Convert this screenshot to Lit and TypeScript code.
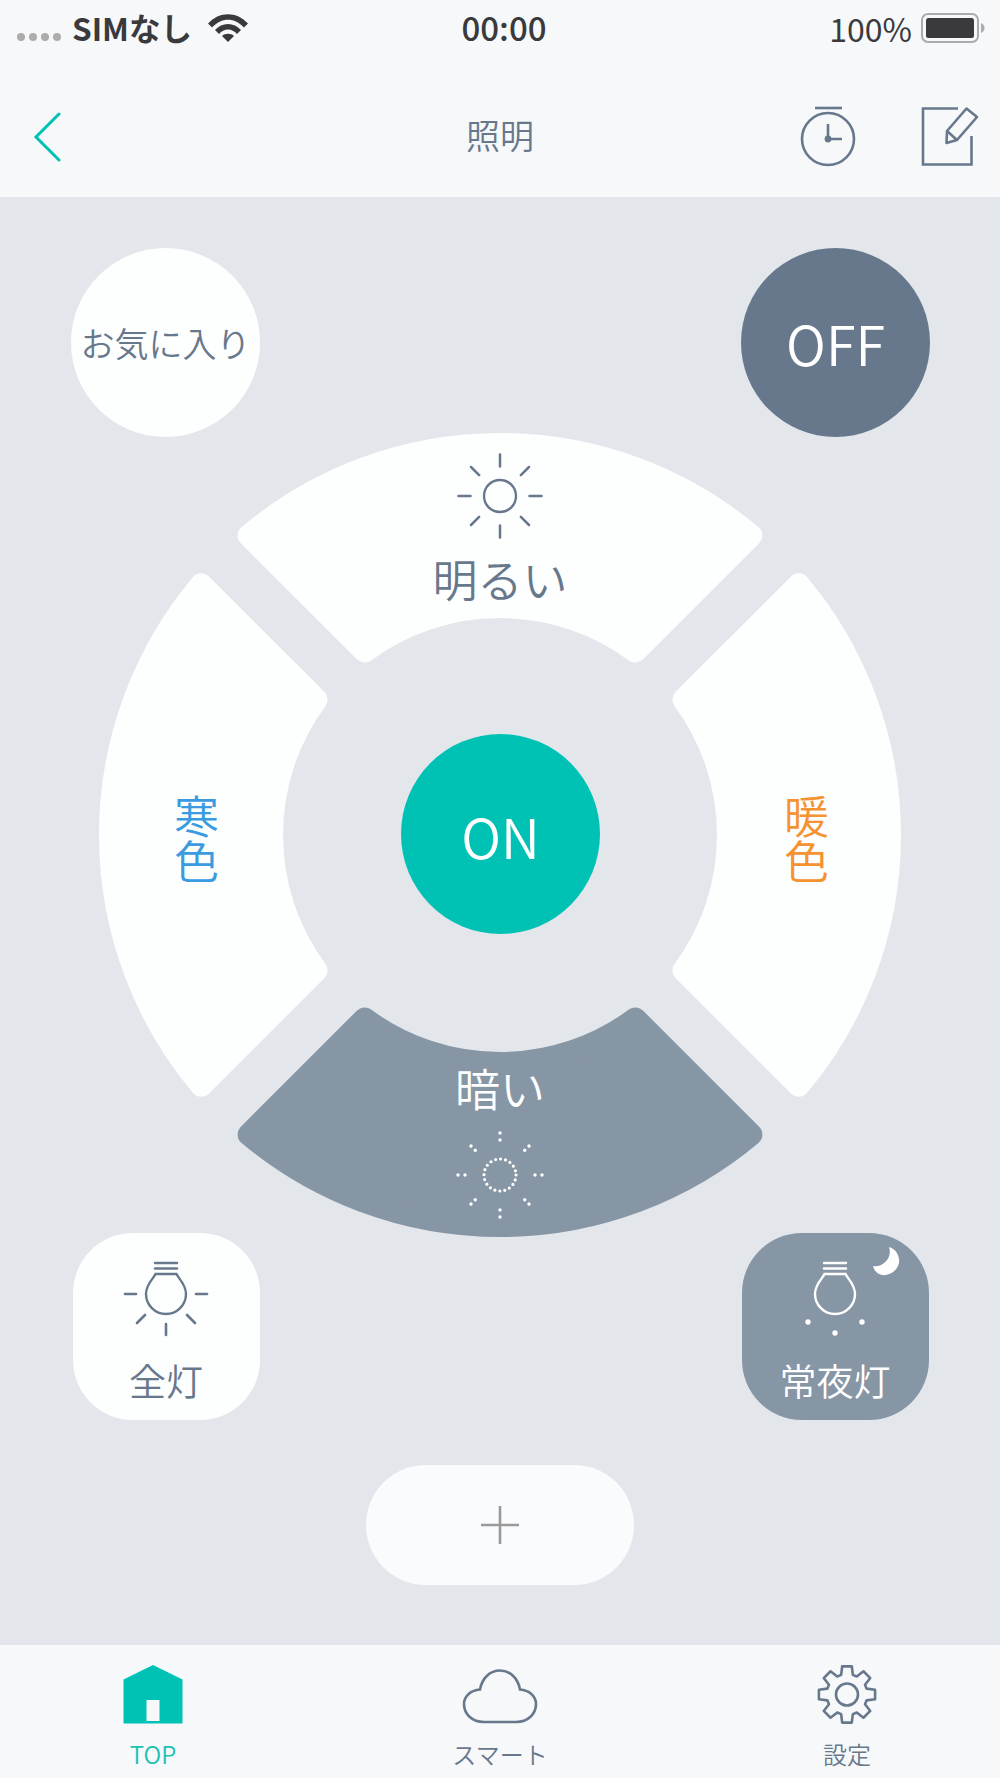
import { LitElement, html, css, svg } from "lit";
import { customElement } from "lit/decorators.js";

const RAD = Math.PI / 180;

function segmentPath(theta: number, ro = 391, cx = 402, cy = 402, ri = 228, d = 34): string {
  const pt = (r: number, a: number) => {
    const t = (a - 90) * RAD;
    return `${(cx + r * Math.cos(t)).toFixed(2)} ${(cy + r * Math.sin(t)).toFixed(2)}`;
  };
  const ao = 45 - Math.asin(d / ro) / RAD;
  const ai = 45 - Math.asin(d / ri) / RAD;
  return `M${pt(ro, theta - ao)} A${ro} ${ro} 0 0 1 ${pt(ro, theta + ao)} L${pt(ri, theta + ai)} A${ri} ${ri} 0 0 0 ${pt(ri, theta - ai)} Z`;
}

function gearPath(cx: number, cy: number): string {
  const pts: string[] = [];
  for (let k = 0; k < 8; k++) {
    const a = (k * 45 - 90) * RAD;
    const seq: [number, number][] = [[20.5, -0.29], [28.5, -0.17], [28.5, 0.17], [20.5, 0.29]];
    for (const [r, o] of seq) {
      pts.push(`${(cx + r * Math.cos(a + o)).toFixed(2)} ${(cy + r * Math.sin(a + o)).toFixed(2)}`);
    }
  }
  return `M${pts.join(" L")} Z`;
}

const rays = [0, 45, 90, 135, 180, 225, 270, 315];

function sun(dim: boolean) {
  return svg`<svg class="sun" viewBox="-46 -46 92 92" width="92" height="92" aria-hidden="true">
    ${dim
      ? svg`<circle r="16" fill="none" stroke="#fff" stroke-width="3.2" stroke-linecap="round" stroke-dasharray="0 5.03"/>
        ${rays.map((a) => {
          const diag = a % 90 !== 0;
          const r1 = 35;
          const r2 = diag ? 41 : 42;
          return svg`<g transform="rotate(${a})"><circle cx="0" cy="${-r1}" r="1.7" fill="#fff"/><circle cx="0" cy="${-r2}" r="1.7" fill="#fff"/></g>`;
        })}`
      : svg`<circle r="16" fill="none" stroke="#68788c" stroke-width="2.4"/>
        ${rays.map((a) => {
          const diag = a % 90 !== 0;
          return svg`<line transform="rotate(${a})" x1="0" y1="-29.5" x2="0" y2="${diag ? -41 : -41.5}" stroke="#68788c" stroke-width="2.5" stroke-linecap="round"/>`;
        })}`}
  </svg>`;
}

function bulb(color: string, extra: unknown) {
  return svg`<svg class="bulb" viewBox="-46 0 92 84" width="92" height="84" aria-hidden="true">
    <g fill="none" stroke="${color}" stroke-width="2.4" stroke-linecap="round">
      <line x1="-11" y1="3" x2="11" y2="3"/>
      <line x1="-11" y1="8.5" x2="11" y2="8.5"/>
      <path d="M-10.5 14 H10.5 C12 18 20 24 20 34 C20 45 11 54 0 54 C-11 54 -20 45 -20 34 C-20 24 -12 18 -10.5 14 Z"/>
    </g>
    ${extra}
  </svg>`;
}

@customElement("app-root")
export class AppRoot extends LitElement {
  static styles = css`
    :host {
      display: flex;
      flex-direction: column;
      width: 1000px;
      height: 1778px;
      background: #f6f8fa;
      font-family: "Noto Sans CJK JP", "Noto Sans", sans-serif;
      font-weight: 350;
      color: #68788c;
      overflow: hidden;
    }
    .status {
      height: 55px;
      margin-bottom: 5px;
      display: grid;
      grid-template-columns: 1fr auto 1fr;
      align-items: center;
      padding: 0 15px 0 17px;
      font-size: 32px;
      color: #3a3a3c;
      line-height: 1;
    }
    .st-left, .st-right { display: flex; align-items: center; }
    .st-right { justify-content: flex-end; font-weight: 400; }
    .dots { display: flex; gap: 4px; margin-right: 11px; margin-top: 18px; }
    .dots i { width: 8px; height: 8px; border-radius: 50%; background: #acacac; }
    .sim { font-weight: 700; font-size: 31.5px; }
    .wifi { margin-left: 16px; }
    .time { font-weight: 500; font-size: 33px; transform: translateX(3px); }
    .batt { margin-left: 9px; }
    .nav {
      height: 137px;
      padding-top: 16px;
      box-sizing: border-box;
      display: grid;
      grid-template-columns: 1fr auto 1fr;
      align-items: center;
    }
    .back { display: block; margin-left: 33px; }
    .title { font-size: 34px; line-height: 1; margin-top: -4px; }
    .nav-actions { display: flex; justify-content: flex-end; padding-right: 20px; }
    .main {
      flex: 1;
      background: #e3e7ec;
      display: flex;
      flex-direction: column;
      align-items: center;
      padding-top: 51px;
    }
    .row { width: 859px; margin-left: 1px; display: flex; justify-content: space-between; }
    .round {
      width: 189px; height: 189px; border-radius: 50%;
      display: flex; align-items: center; justify-content: center;
      line-height: 1;
    }
    .fav { background: #fdfefe; font-size: 34px; white-space: nowrap; }
    .off { background: #67788c; color: #fff; font-size: 54px; }
    .wheel { position: relative; width: 804px; height: 804px; margin-top: -4px; }
    .wheel > svg { display: block; }
    .seg-label {
      position: absolute; left: 0; right: 0;
      display: flex; flex-direction: column; align-items: center;
      font-size: 45px; line-height: 1;
    }
    .up { top: 17px; }
    .up .t { margin-top: 14px; }
    .down { top: 632px; color: #fff; }
    .down .sun { margin-top: 19px; }
    .side {
      position: absolute; top: 361px;
      width: 84px; height: 90px;
      writing-mode: vertical-rl;
      font-size: 45px; line-height: 84px; text-align: center;
    }
    .cold { left: 56px; color: #3b9be1; }
    .warm { left: 666px; color: #f59231; }
    .on {
      position: absolute; left: 303px; top: 301px;
      width: 199px; height: 200px; border-radius: 50%;
      background: #00c2b4; color: #fff;
      display: flex; align-items: center; justify-content: center;
      padding-top: 4px; box-sizing: border-box;
      font-size: 54px; line-height: 1;
    }
    .row2 { margin-top: -4px; width: 856px; margin-left: 1px; }
    .preset {
      position: relative;
      width: 187px; height: 187px; border-radius: 60px;
      display: flex; flex-direction: column; align-items: center;
      padding-top: 27px; box-sizing: border-box;
      font-size: 37px; line-height: 1;
    }
    .preset .t { margin-top: 18px; white-space: nowrap; }
    .preset svg { overflow: visible; }
    .all { background: #fdfefe; }
    .night { background: #8796a5; color: #fff; }
    .add {
      margin-top: 45px; width: 268px; height: 120px; border-radius: 60px;
      background: #fafbfd; display: flex; align-items: center; justify-content: center;
    }
    .tabs {
      height: 133px;
      display: grid;
      grid-template-columns: 306px 1fr 306px;
    }
    .tab {
      display: flex; flex-direction: column; align-items: center;
      font-size: 24px; line-height: 1;
      padding-top: 19px;
      height: 133px; box-sizing: border-box;
    }
    .tab svg { display: block; }
    .tab .t { margin-top: 18px; }
    .tab.top { color: #1cc2b4; }
  `;

  render() {
    const dark = "#68788c";
    return html`
      <div class="status">
        <div class="st-left">
          <div class="dots"><i></i><i></i><i></i><i></i></div>
          <span class="sim">SIMなし</span>
          <svg class="wifi" width="40" height="28" viewBox="0 0 40 28" aria-hidden="true">
            <path fill="#3a3a3c" d="M0 9.5 C11-3 29-3 40 9.5 L36 13.5 C26.5 3 13.5 3 4 13.5 Z"/>
            <path fill="#3a3a3c" d="M7 16 C14 8 26 8 33 16 L29 20 C24 14 16 14 11 20 Z"/>
            <path fill="#3a3a3c" d="M14 22 C17 19 23 19 26 22 L20 28 Z"/>
          </svg>
        </div>
        <div class="time">00:00</div>
        <div class="st-right">
          <span>100%</span>
          <svg class="batt" width="64" height="30" viewBox="0 0 64 30" aria-hidden="true">
            <rect x="1" y="1" width="56" height="28" rx="6" fill="none" stroke="#acacac" stroke-width="2"/>
            <rect x="5" y="5" width="48" height="20" rx="2.5" fill="#3a3a3c"/>
            <path d="M60 10 C62.5 11 63.5 13 63.5 15 C63.5 17 62.5 19 60 20 Z" fill="#acacac"/>
          </svg>
        </div>
      </div>
      <div class="nav">
        <svg class="back" width="32" height="50" viewBox="0 0 32 50" aria-hidden="true">
          <path d="M26 2 L3 25 L26 48" fill="none" stroke="#00c2b4" stroke-width="3" stroke-linecap="round"/>
        </svg>
        <div class="title">照明</div>
        <div class="nav-actions">
          <svg width="180" height="62" viewBox="800 106 180 62" aria-hidden="true">
            <g fill="none" stroke="${dark}" stroke-width="2.6">
              <line x1="815" y1="108" x2="842" y2="108"/>
              <circle cx="828" cy="139" r="26"/>
              <path d="M828 124 V139 H842"/>
              <path d="M958 108.5 H923 V164.5 H971.5 V136"/>
              <path d="M946.5 143 L947 131 L966.5 108.5 L977 117 L957 140 Z M947 131 L957 140" stroke-linejoin="round"/>
            </g>
            <circle cx="828" cy="139" r="3.4" fill="${dark}"/>
          </svg>
        </div>
      </div>
      <div class="main">
        <div class="row">
          <div class="round fav">お気に入り</div>
          <div class="round off">OFF</div>
        </div>
        <div class="wheel">
          <svg width="804" height="804" viewBox="0 0 804 804" aria-hidden="true">
            <g stroke-width="22" stroke-linejoin="round">
              <path d="${segmentPath(0)}" fill="#fdfefe" stroke="#fdfefe"/>
              <path d="${segmentPath(90, 390)}" fill="#fdfefe" stroke="#fdfefe"/>
              <path d="${segmentPath(270, 390)}" fill="#fdfefe" stroke="#fdfefe"/>
              <path d="${segmentPath(180)}" fill="#8796a5" stroke="#8796a5"/>
            </g>
          </svg>
          <div class="seg-label up">${sun(false)}<span class="t">明るい</span></div>
          <div class="seg-label down"><span class="t">暗い</span>${sun(true)}</div>
          <div class="side cold">寒色</div>
          <div class="side warm">暖色</div>
          <div class="on">ON</div>
        </div>
        <div class="row row2">
          <div class="preset all">
            ${bulb(dark, svg`<g stroke="${dark}" stroke-width="2.6" stroke-linecap="round">
              <line x1="-41" y1="34" x2="-30" y2="34"/><line x1="30" y1="34" x2="41" y2="34"/>
              <line x1="-29" y1="63" x2="-21" y2="55"/><line x1="21" y1="55" x2="29" y2="63"/>
              <line x1="0" y1="64" x2="0" y2="75"/>
            </g>`)}
            <span class="t">全灯</span>
          </div>
          <div class="preset night">
            ${bulb("#fff", svg`<g fill="#fff">
              <circle cx="-27" cy="62" r="2.7"/><circle cx="27" cy="62" r="2.7"/><circle cx="0" cy="73" r="2.7"/>
              <path d="M54 -13 C62 -11 65 -2 64 3 C62 12 53 16 47 15 C42 14 39 10 38 6 C47 8 58 -2 54 -13 Z"/>
            </g>`)}
            <span class="t">常夜灯</span>
          </div>
        </div>
        <div class="add">
          <svg width="40" height="40" viewBox="0 0 40 40" aria-hidden="true">
            <path d="M20 1 V39 M1 20 H39" stroke="#9a9a9a" stroke-width="2.6" fill="none"/>
          </svg>
        </div>
      </div>
      <div class="tabs">
        <div class="tab top">
          <svg width="60" height="60" viewBox="122.5 1664 60 60" aria-hidden="true">
            <path fill="#00c2b4" fill-rule="evenodd" d="M152.5 1665 L182 1679.5 V1723.5 H123 V1679.5 Z M146 1700 V1721 H159 V1700 Z"/>
          </svg>
          <span class="t">TOP</span>
        </div>
        <div class="tab">
          <svg width="76" height="60" viewBox="462 1664 76 60" aria-hidden="true">
            <path fill="none" stroke="${dark}" stroke-width="2.6" d="M484 1722 H516 C528 1722 536 1714 536 1704 C536 1696 529 1690 520 1689.5 C518 1678 510 1670.5 500 1670.5 C490 1670.5 482 1678 480 1689.5 C471 1690 464 1696 464 1704 C464 1714 472 1722 484 1722 Z"/>
          </svg>
          <span class="t">スマート</span>
        </div>
        <div class="tab">
          <svg width="60" height="60" viewBox="818 1664 60 60" aria-hidden="true">
            <path fill="none" stroke="${dark}" stroke-width="2.6" stroke-linejoin="round" d="${gearPath(848, 1694.5)}"/>
            <circle cx="848" cy="1694.5" r="11" fill="none" stroke="${dark}" stroke-width="2.6"/>
          </svg>
          <span class="t">設定</span>
        </div>
      </div>
    `;
  }
}
